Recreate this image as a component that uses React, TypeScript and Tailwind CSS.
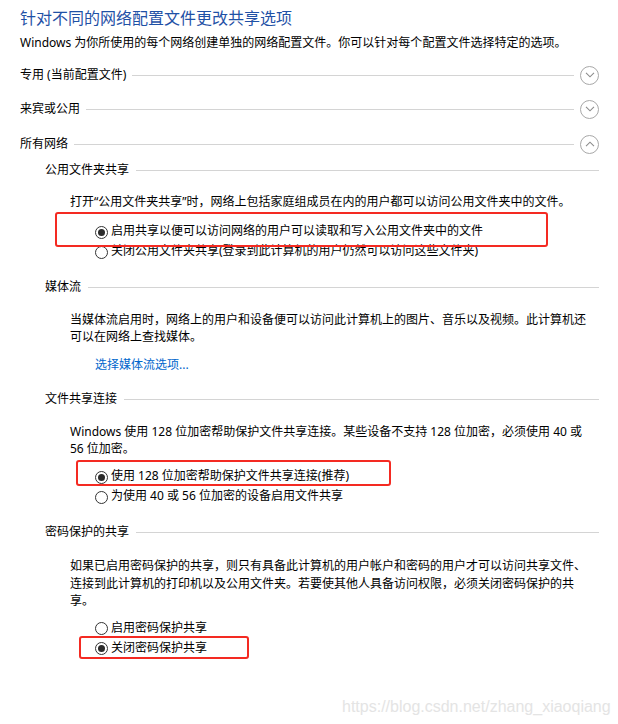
import React from "react";

const font = { fontFamily: "'Noto Sans', 'Noto Sans CJK SC', sans-serif" };

function Chevron({ up }: { up?: boolean }) {
  return (
    <div className="w-[19px] h-[19px] rounded-full border border-[#a8a8a8] flex items-center justify-center shrink-0">
      <svg width="10" height="6" viewBox="0 0 10 6" fill="none">
        {up ? (
          <path d="M1 5.2 L5 1.2 L9 5.2" stroke="#8c8c8c" strokeWidth="1.1" />
        ) : (
          <path d="M1 0.8 L5 4.8 L9 0.8" stroke="#8c8c8c" strokeWidth="1.1" />
        )}
      </svg>
    </div>
  );
}

function Profile({ label, up, className }: { label: string; up?: boolean; className?: string }) {
  return (
    <div className={"flex items-center h-[20px] " + (className || "")}>
      <span className="text-[12px] leading-[20px] text-black whitespace-nowrap">{label}</span>
      <div className="flex-1 h-px bg-[#d4d4d4] ml-[6px] mr-[6px]" />
      <Chevron up={up} />
    </div>
  );
}

function Section({ label, className }: { label: string; className?: string }) {
  return (
    <div className={"flex items-center h-[20px] " + (className || "")}>
      <span className="text-[12px] leading-[20px] text-black whitespace-nowrap">{label}</span>
      <div className="flex-1 h-px bg-[#d4d4d4] ml-[7px]" />
    </div>
  );
}

function Radio({ label, checked, className }: { label: string; checked?: boolean; className?: string }) {
  return (
    <div className={"flex items-center h-[20px] pl-[25px] " + (className || "")}>
      <div className="w-[13px] h-[13px] rounded-full border border-[#333333] bg-white flex items-center justify-center shrink-0 mt-[2px]">
        {checked && <div className="w-[7px] h-[7px] rounded-full bg-[#2b2b2b]" />}
      </div>
      <span className="ml-[3px] text-[12px] leading-[20px] text-black whitespace-nowrap">{label}</span>
    </div>
  );
}

export default function App() {
  return (
    <div className="relative w-[618px] h-[724px] bg-white overflow-hidden" style={font}>
      <div className="pl-[20px] pr-[19px] pt-[7px]">
        <h1 className="text-[16px] leading-[22px] text-[#1f51a6] font-normal">针对不同的网络配置文件更改共享选项</h1>
        <p className="mt-[5px] text-[12px] leading-[18px] text-black">
          Windows 为你所使用的每个网络创建单独的网络配置文件。你可以针对每个配置文件选择特定的选项。
        </p>

        <Profile label="专用 (当前配置文件)" className="mt-[13px]" />
        <Profile label="来宾或公用" className="mt-[14px]" />
        <Profile label="所有网络" up className="mt-[15px]" />

        <div className="pl-[25px]">
          <Section label="公用文件夹共享" className="mt-[6px]" />
          <div className="pl-[25px]">
            <p className="mt-[13px] text-[12px] leading-[18px] text-black">
              打开“公用文件夹共享”时，网络上包括家庭组成员在内的用户都可以访问公用文件夹中的文件。
            </p>
            <Radio label="启用共享以便可以访问网络的用户可以读取和写入公用文件夹中的文件" checked className="mt-[10px]" />
            <Radio label="关闭公用文件夹共享(登录到此计算机的用户仍然可以访问这些文件夹)" />
          </div>

          <Section label="媒体流" className="mt-[16px]" />
          <div className="pl-[25px]">
            <p className="mt-[14px] text-[12px] leading-[17px] text-black">
              当媒体流启用时，网络上的用户和设备便可以访问此计算机上的图片、音乐以及视频。此计算机还
              <br />
              可以在网络上查找媒体。
            </p>
            <p className="mt-[11px] pl-[25px] text-[12px] leading-[18px] text-[#0066cc]">选择媒体流选项...</p>
          </div>

          <Section label="文件共享连接" className="mt-[15px]" />
          <div className="pl-[25px]">
            <p className="mt-[14px] text-[12px] leading-[17px] text-black">
              Windows 使用 128 位加密帮助保护文件共享连接。某些设备不支持 128 位加密，必须使用 40 或
              <br />
              56 位加密。
            </p>
            <Radio label="使用 128 位加密帮助保护文件共享连接(推荐)" checked className="mt-[9px]" />
            <Radio label="为使用 40 或 56 位加密的设备启用文件共享" />
          </div>

          <Section label="密码保护的共享" className="mt-[16px]" />
          <div className="pl-[25px]">
            <p className="mt-[15px] text-[12px] leading-[17.5px] text-black">
              如果已启用密码保护的共享，则只有具备此计算机的用户帐户和密码的用户才可以访问共享文件、
              <br />
              连接到此计算机的打印机以及公用文件夹。若要使其他人具备访问权限，必须关闭密码保护的共
              <br />
              享。
            </p>
            <Radio label="启用密码保护共享" className="mt-[8px]" />
            <Radio label="关闭密码保护共享" checked />
          </div>
        </div>
      </div>

      {/* annotation boxes */}
      <div className="absolute left-[55px] top-[212px] w-[493px] h-[35px] border-[2.5px] border-[#f42a22] rounded-[3px]" />
      <div className="absolute left-[76px] top-[460px] w-[315px] h-[26px] border-[2.5px] border-[#f42a22] rounded-[3px]" />
      <div className="absolute left-[79px] top-[636px] w-[170px] h-[23px] border-[2.5px] border-[#f42a22] rounded-[3px]" />

      <div
        className="absolute left-[342px] top-[697px] text-[16px] leading-[20px] text-[#e4e4e4] whitespace-nowrap"
        style={{ fontFamily: "'Liberation Sans', Arial, sans-serif" }}
      >
        https://blog.csdn.net/zhang_xiaoqiang
      </div>
    </div>
  );
}
